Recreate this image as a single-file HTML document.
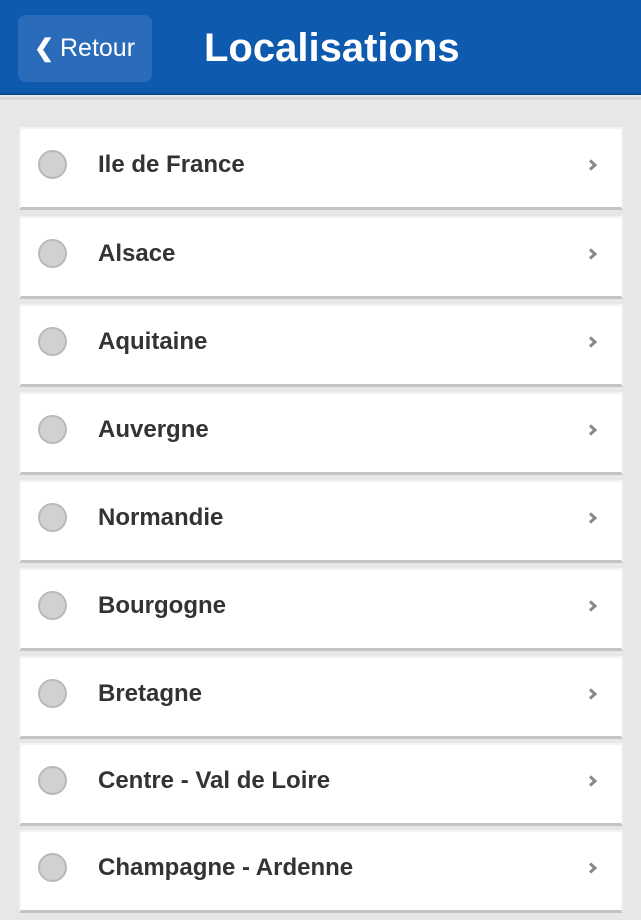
<!DOCTYPE html>
<html><head><meta charset="utf-8"><style>
*{margin:0;padding:0;box-sizing:border-box}
body{width:641px;height:920px;background:#e7e7e7;font-family:"Liberation Sans",Arial,sans-serif;position:relative;overflow:hidden}
.hdr{position:absolute;left:0;top:0;width:641px;height:95px;background:#0e5aaf;border-bottom:2px solid #0a4a8f}
.hdr:after{content:"";position:absolute;left:0;right:0;top:97px;height:3px;background:#d8d8d8}
.btn{position:absolute;left:18px;top:15px;width:134px;height:67px;background:#2a6cb9;border-radius:8px;color:#fff;font-size:25px;line-height:67px}
.btn .ch{position:absolute;left:16px;top:0;font-weight:bold;font-size:24px}
.btn .t{position:absolute;left:42px;top:0}
.title{position:absolute;left:204px;top:25px;color:#fff;font-weight:bold;font-size:40px;line-height:46px}
.card{position:absolute;left:19px;width:604px;height:83px;background:#fff;border:2px solid #f3f3f3;border-bottom:3px solid #c4c4c4}
.card .c{position:absolute;left:17px;top:21px;width:29px;height:29px;border-radius:50%;background:#d1d1d1;border:2px solid #b9b9b9}
.card .l{position:absolute;left:77px;top:0;line-height:72px;font-weight:bold;font-size:24px;color:#333}
.card svg{position:absolute;left:565px;top:29px}
</style></head><body>
<div class="hdr"><div class="btn"><span class="ch">❮</span><span class="t">Retour</span></div><div class="title">Localisations</div></div>
<div class="card" style="top:127px"><div class="c"></div><div class="l">Ile de France</div><svg width="14" height="14" viewBox="0 0 14 14"><path d="M4 2.5l5 4.5-5 4.5" stroke="#888" stroke-width="3" fill="none"/></svg></div>
<div class="card" style="top:216px"><div class="c"></div><div class="l">Alsace</div><svg width="14" height="14" viewBox="0 0 14 14"><path d="M4 2.5l5 4.5-5 4.5" stroke="#888" stroke-width="3" fill="none"/></svg></div>
<div class="card" style="top:304px"><div class="c"></div><div class="l">Aquitaine</div><svg width="14" height="14" viewBox="0 0 14 14"><path d="M4 2.5l5 4.5-5 4.5" stroke="#888" stroke-width="3" fill="none"/></svg></div>
<div class="card" style="top:392px"><div class="c"></div><div class="l">Auvergne</div><svg width="14" height="14" viewBox="0 0 14 14"><path d="M4 2.5l5 4.5-5 4.5" stroke="#888" stroke-width="3" fill="none"/></svg></div>
<div class="card" style="top:480px"><div class="c"></div><div class="l">Normandie</div><svg width="14" height="14" viewBox="0 0 14 14"><path d="M4 2.5l5 4.5-5 4.5" stroke="#888" stroke-width="3" fill="none"/></svg></div>
<div class="card" style="top:568px"><div class="c"></div><div class="l">Bourgogne</div><svg width="14" height="14" viewBox="0 0 14 14"><path d="M4 2.5l5 4.5-5 4.5" stroke="#888" stroke-width="3" fill="none"/></svg></div>
<div class="card" style="top:656px"><div class="c"></div><div class="l">Bretagne</div><svg width="14" height="14" viewBox="0 0 14 14"><path d="M4 2.5l5 4.5-5 4.5" stroke="#888" stroke-width="3" fill="none"/></svg></div>
<div class="card" style="top:743px"><div class="c"></div><div class="l">Centre - Val de Loire</div><svg width="14" height="14" viewBox="0 0 14 14"><path d="M4 2.5l5 4.5-5 4.5" stroke="#888" stroke-width="3" fill="none"/></svg></div>
<div class="card" style="top:830px"><div class="c"></div><div class="l">Champagne - Ardenne</div><svg width="14" height="14" viewBox="0 0 14 14"><path d="M4 2.5l5 4.5-5 4.5" stroke="#888" stroke-width="3" fill="none"/></svg></div>
</body></html>
